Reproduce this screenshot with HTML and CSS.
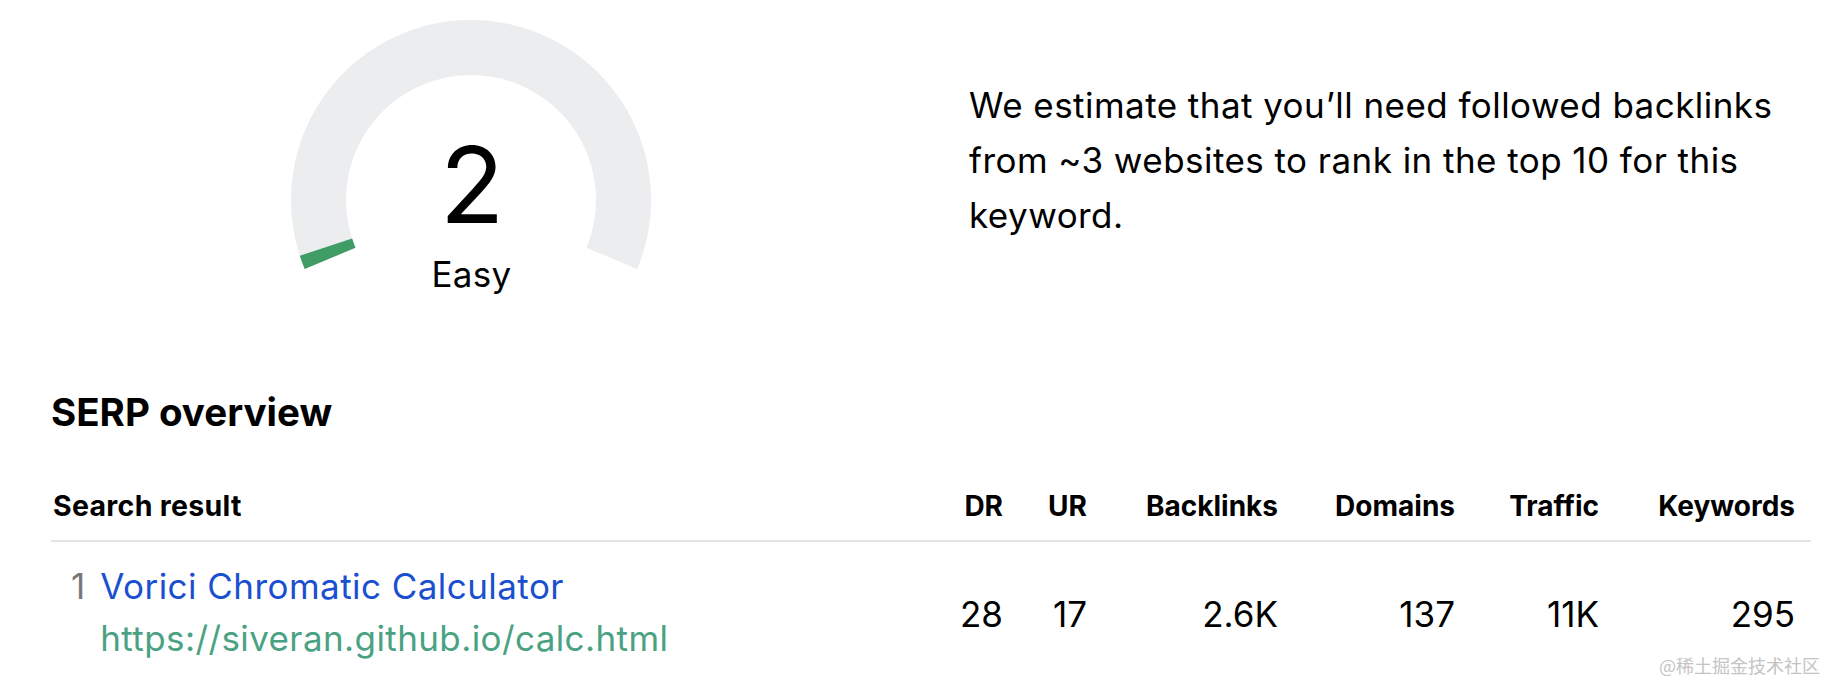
FILE: index.html
```html
<!DOCTYPE html>
<html lang="en">
<head>
<meta charset="utf-8">
<title>Keyword difficulty</title>
<link rel="stylesheet" href="styles.css">
</head>
<body>
<main class="page">
  <section class="top">
    <div class="gauge">
      <svg class="gauge-arc" width="360" height="270" viewBox="0 0 360 270" aria-hidden="true">
        <path d="M 39.11 238.36 A 152.5 152.5 0 1 1 320.89 238.36" fill="none" stroke="#ebedef" stroke-width="55"/>
        <path d="M 39.11 238.36 A 152.5 152.5 0 0 1 34.96 227.13" fill="none" stroke="#3f9c65" stroke-width="55"/>
      </svg>
      <div class="gauge-value">2</div>
      <div class="gauge-label">Easy</div>
    </div>
    <p class="estimate">We estimate that you’ll need followed backlinks from ~3 websites to rank in the top 10 for this keyword.</p>
  </section>

  <h2 class="serp-title">SERP overview</h2>

  <div class="serp">
    <div class="serp-row serp-head">
      <div class="cell cell-left">Search result</div>
      <div class="cell">DR</div>
      <div class="cell">UR</div>
      <div class="cell">Backlinks</div>
      <div class="cell">Domains</div>
      <div class="cell">Traffic</div>
      <div class="cell">Keywords</div>
    </div>
    <div class="serp-row serp-item">
      <div class="cell cell-left result">
        <span class="rank">1</span>
        <div class="result-text">
          <a class="result-title" href="#">Vorici Chromatic Calculator</a>
          <span class="result-url">https://siveran.github.io/calc.html</span>
        </div>
      </div>
      <div class="cell num">28</div>
      <div class="cell num">17</div>
      <div class="cell num">2.6K</div>
      <div class="cell num">137</div>
      <div class="cell num">11K</div>
      <div class="cell num">295</div>
    </div>
  </div>
  <div class="watermark">@稀土掘金技术社区</div>
</main>
</body>
</html>
```

FILE: styles.css
```css
* { box-sizing: border-box; }

html, body {
  margin: 0;
  padding: 0;
  background: #ffffff;
}

body {
  font-family: Inter, "Noto Sans", "Liberation Sans", sans-serif;
  color: #000000;
  width: 1828px;
  height: 682px;
  overflow: hidden;
}

.page {
  position: relative;
  padding: 20px 17px 0 51px;
  height: 682px;
}

.top {
  display: flex;
  align-items: flex-start;
}

.gauge {
  position: relative;
  flex: 0 0 360px;
  width: 360px;
  margin-left: 240px;
  padding-top: 112px;
  display: flex;
  flex-direction: column;
  align-items: center;
}

.gauge-arc {
  position: absolute;
  left: 0;
  top: 0;
}

.gauge-value {
  position: relative;
  font-size: 106px;
  line-height: 106px;
  font-weight: 400;
  padding-left: 2px;
}

.gauge-label {
  position: relative;
  font-size: 35px;
  line-height: 42px;
  margin-top: 15px;
  letter-spacing: 0.3px;
  padding-left: 1px;
}

.estimate {
  flex: 0 0 820px;
  margin: 58px 0 0 318px;
  width: 820px;
  font-size: 35px;
  line-height: 55px;
  letter-spacing: 0.45px;
}

.serp-title {
  margin: 94px 0 0 0;
  font-size: 38.5px;
  line-height: 46px;
  font-weight: 700;
}

.serp {
  margin-top: 54px;
}

.serp-row {
  display: grid;
  grid-template-columns: 888px 64px 84px 191px 177px 144px 196px;
  padding-right: 16px;
}

.serp-head {
  border-bottom: 2px solid #e3e4e6;
  padding-bottom: 17px;
}

.serp-head .cell {
  font-size: 28px;
  line-height: 34px;
  font-weight: 700;
}

.serp-head .cell-left {
  font-size: 28.5px;
  letter-spacing: 0.3px;
}

.cell {
  text-align: right;
  white-space: nowrap;
}

.cell-left {
  text-align: left;
  padding-left: 2px;
}

.serp-item {
  padding-top: 18px;
}

.result {
  display: flex;
  align-items: flex-start;
  gap: 15px;
  padding-left: 20px;
}

.rank {
  font-size: 35px;
  line-height: 52px;
  color: #777777;
}

.result-text {
  display: flex;
  flex-direction: column;
}

.result-title {
  font-size: 35px;
  line-height: 52px;
  color: #1a4fcf;
  text-decoration: none;
  letter-spacing: 0.45px;
}

.result-url {
  font-size: 35px;
  line-height: 52px;
  color: #4aa283;
  letter-spacing: 0.4px;
}

.num {
  align-self: center;
  font-size: 35px;
  line-height: 52px;
  padding-top: 4px;
}

.watermark {
  position: absolute;
  right: 8px;
  bottom: 6px;
  font-family: "Noto Sans CJK SC", sans-serif;
  font-size: 18px;
  line-height: 22px;
  color: #c4c4c4;
}
```
